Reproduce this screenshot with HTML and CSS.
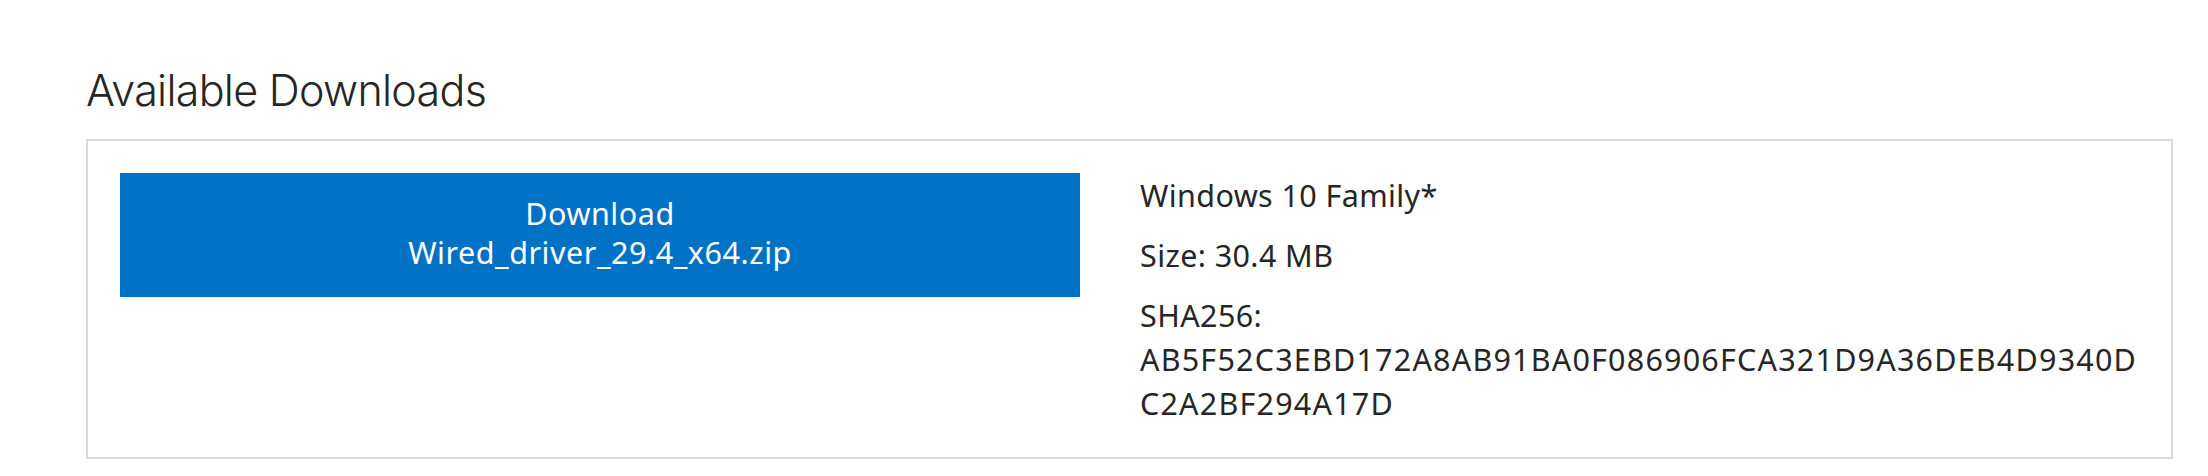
FILE: index.html
```html
<!DOCTYPE html>
<html lang="en">
<head>
<meta charset="utf-8">
<title>Available Downloads</title>
<link rel="stylesheet" href="styles.css">
</head>
<body>
<section class="downloads">
  <h2 class="downloads-title">Available Downloads</h2>
  <div class="download-card">
    <a class="download-button" href="#">
      <span class="download-label">Download</span>
      <span class="download-file">Wired_driver_29.4_x64.zip</span>
    </a>
    <div class="download-details">
      <p class="detail">Windows 10 Family*</p>
      <p class="detail">Size: 30.4 MB</p>
      <p class="detail">SHA256:<br><span class="hash">AB5F52C3EBD172A8AB91BA0F086906FCA321D9A36DEB4D9340D</span><br><span class="hash">C2A2BF294A17D</span></p>
    </div>
  </div>
</section>
</body>
</html>
```
FILE: styles.css
```css
html, body {
  margin: 0;
  padding: 0;
  background: #ffffff;
}

body {
  font-family: "Noto Sans", "Open Sans", "Liberation Sans", sans-serif;
  color: #262626;
}

.downloads {
  padding: 64px 35px 0 86px;
}

.downloads-title {
  margin: 0 0 23px;
  font-family: Inter, "Lato", sans-serif;
  font-weight: 300;
  font-size: 43px;
  line-height: 52px;
  letter-spacing: -0.7px;
  color: #262626;
}

.download-card {
  border: 2px solid #d9d9d9;
  padding: 32px;
  display: grid;
  grid-template-columns: 960px 1fr;
  column-gap: 60px;
  align-items: start;
}

.download-button {
  display: flex;
  flex-direction: column;
  align-items: center;
  padding: 21px 0 25px;
  background: #0071c5;
  color: #ffffff;
  text-decoration: none;
  font-size: 30.5px;
  line-height: 39px;
  letter-spacing: 0.55px;
}

.download-details {
  font-size: 30.5px;
  line-height: 44px;
  letter-spacing: 0.4px;
}

.detail {
  margin: 0 0 16px;
}

.detail:last-child {
  margin-bottom: 0;
}

.hash {
  white-space: nowrap;
  letter-spacing: 1.2px;
}
```
